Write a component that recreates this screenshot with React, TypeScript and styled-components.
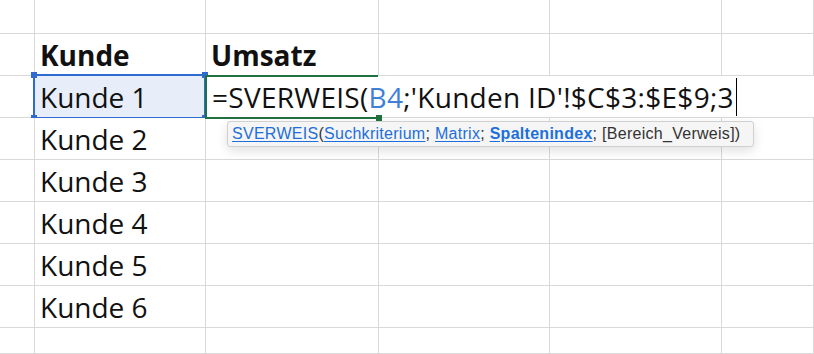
import React from 'react'
import styled, { createGlobalStyle } from 'styled-components'

const GlobalStyle = createGlobalStyle`
  html, body {
    margin: 0;
    padding: 0;
    background: #ffffff;
    overflow: hidden;
  }
`

const Sheet = styled.div`
  display: grid;
  grid-template-columns: 35px 171px 173px 171px 172px 1fr;
  grid-template-rows: 34px repeat(7, 42px) 1fr;
  width: 814px;
  height: 354px;
  overflow: hidden;
  font-family: 'Open Sans', 'DejaVu Sans', sans-serif;
  color: #111;
`

const Cell = styled.div<{ $bold?: boolean; $selected?: boolean }>`
  position: relative;
  display: flex;
  align-items: flex-end;
  padding: 0 5px 6px;
  box-sizing: border-box;
  min-width: 0;
  border-right: 1px solid #d9d9d9;
  border-bottom: 1px solid #d9d9d9;
  font-size: 28px;
  line-height: 28px;
  font-weight: ${(p) => (p.$bold ? 700 : 400)};
  background: ${(p) => (p.$selected ? '#e8eef9' : '#ffffff')};
  white-space: nowrap;
`

const SelectionFrame = styled.div`
  position: absolute;
  left: -2px;
  top: -2px;
  right: -1px;
  bottom: -2px;
  border: 2px solid #2e6ad0;
  pointer-events: none;
`

const Handle = styled.span<{ $color: string; $x: 'left' | 'right'; $y: 'top' | 'bottom' }>`
  position: absolute;
  width: 6px;
  height: 6px;
  background: ${(p) => p.$color};
  ${(p) => p.$x}: -4px;
  ${(p) => p.$y}: -4px;
`

const Editor = styled.div`
  position: relative;
  grid-column: 3 / -1;
  display: flex;
  align-items: flex-end;
  padding: 0 5px 6px 6px;
  box-sizing: border-box;
  border-bottom: 1px solid #d9d9d9;
  font-size: 28px;
  line-height: 28px;
  letter-spacing: 0.28px;
  white-space: nowrap;
  background: #ffffff;
  z-index: 1;
`

const EditFrame = styled.div`
  position: absolute;
  left: -1px;
  top: -1px;
  width: 173px;
  bottom: -2px;
  border-top: 2px solid #1f7240;
  border-bottom: 2px solid #1f7240;
  border-left: 2px solid #1f7240;
  box-sizing: border-box;
  pointer-events: none;
`

const Ref = styled.span`
  color: #3f7fd8;
`

const Caret = styled.span`
  display: inline-block;
  width: 1px;
  height: 38px;
  margin-left: 2px;
  margin-bottom: -5px;
  background: #000;
  vertical-align: bottom;
`

const Tooltip = styled.div`
  position: absolute;
  left: 21px;
  top: 100%;
  margin-top: 4px;
  width: 527px;
  height: 26px;
  display: flex;
  align-items: center;
  padding: 0 4px;
  box-sizing: border-box;
  background: #f5f5f5;
  border: 1px solid #d0d0d0;
  border-radius: 3px;
  box-shadow: 0 4px 12px rgba(0, 0, 0, 0.12);
  font-family: 'Liberation Sans', Arial, sans-serif;
  font-size: 16px;
  letter-spacing: 0.28px;
  line-height: 1;
  color: #333;
  z-index: 2;
`

const Arg = styled.span<{ $active?: boolean }>`
  color: #1d6fdc;
  text-decoration: underline;
  text-underline-offset: 2px;
  font-weight: ${(p) => (p.$active ? 700 : 400)};
`

const customers = ['Kunde 2', 'Kunde 3', 'Kunde 4', 'Kunde 5', 'Kunde 6']

const EmptyRow: React.FC = () => (
  <>
    <Cell />
    <Cell />
    <Cell />
    <Cell />
    <Cell />
    <Cell />
  </>
)

const App: React.FC = () => {
  return (
    <>
      <GlobalStyle />
      <Sheet>
        <EmptyRow />

        <Cell />
        <Cell $bold>Kunde</Cell>
        <Cell $bold>Umsatz</Cell>
        <Cell />
        <Cell />
        <Cell />

        <Cell />
        <Cell $selected>
          Kunde 1
          <SelectionFrame>
            <Handle $color="#2e6ad0" $x="left" $y="top" />
            <Handle $color="#2e6ad0" $x="right" $y="top" />
            <Handle $color="#2e6ad0" $x="left" $y="bottom" />
            <Handle $color="#2e6ad0" $x="right" $y="bottom" />
          </SelectionFrame>
        </Cell>
        <Editor>
          <span>
            =SVERWEIS(<Ref>B4</Ref>;'Kunden ID'!$C$3:$E$9;3
          </span>
          <Caret />
          <EditFrame>
            <Handle $color="#1f7240" $x="right" $y="bottom" />
          </EditFrame>
          <Tooltip>
            <Arg>SVERWEIS</Arg>(<Arg>Suchkriterium</Arg>;&nbsp;<Arg>Matrix</Arg>;&nbsp;
            <Arg $active>Spaltenindex</Arg>;&nbsp;[Bereich_Verweis])
          </Tooltip>
        </Editor>

        {customers.map((name) => (
          <React.Fragment key={name}>
            <Cell />
            <Cell>{name}</Cell>
            <Cell />
            <Cell />
            <Cell />
            <Cell />
          </React.Fragment>
        ))}

        <EmptyRow />
      </Sheet>
    </>
  )
}

export default App
